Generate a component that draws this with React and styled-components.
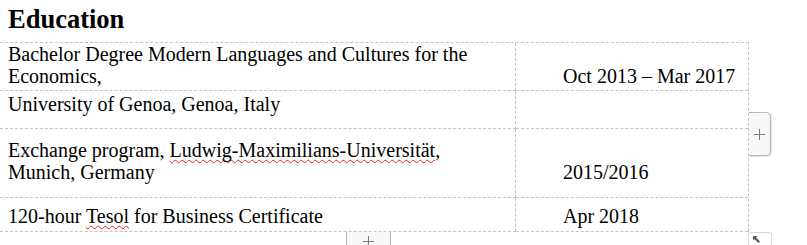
import React from "react";
import styled, { createGlobalStyle } from "styled-components";

const Global = createGlobalStyle`
  html, body { margin: 0; padding: 0; background: #ffffff; overflow: hidden; }
  body { font-family: "Liberation Serif", "Times New Roman", serif; color: #000; }
`;

const Page = styled.div`
  width: 807px;
  height: 245px;
  position: relative;
`;

const Heading = styled.h1`
  margin: 0;
  padding: 4px 0 8px 8px;
  font-family: "Liberation Serif", "Times New Roman", serif;
  font-size: 26.5px;
  line-height: 30px;
  font-weight: bold;
`;

const TableWrap = styled.div`
  position: relative;
  width: 749px;
`;

const Grid = styled.div`
  display: grid;
  grid-template-columns: 516px 232px;
  border-top: 1px dashed #c4c4c4;
  border-right: 1px dashed #c4c4c4;
`;

const Cell = styled.div`
  box-sizing: border-box;
  height: ${(p) => p.$h}px;
  padding: ${(p) => p.$top}px 0 0 ${(p) => (p.$date ? 47 : 8)}px;
  border-bottom: 1px dashed #c4c4c4;
  border-right: ${(p) => (p.$date ? "none" : "1px dashed #c4c4c4")};
  font-size: 20px;
  line-height: 22px;
  white-space: pre-line;
`;

const Squiggle = styled.span`
  text-decoration: underline wavy #e02424;
  text-decoration-thickness: 1px;
  text-underline-offset: 2px;
  text-decoration-skip-ink: none;
`;

const SideAdd = styled.div`
  position: absolute;
  left: 749px;
  top: 70px;
  width: 22px;
  height: 44px;
  box-sizing: border-box;
  background: #f7f7f7;
  border: 1px solid #b8b8b8;
  border-left: none;
  border-radius: 0 5px 5px 0;
  box-shadow: 1px 1px 1px rgba(0, 0, 0, 0.12);
  display: flex;
  align-items: center;
  justify-content: center;
`;

const BottomAdd = styled.div`
  position: absolute;
  left: 346px;
  top: 190px;
  width: 45px;
  height: 24px;
  box-sizing: border-box;
  background: #f7f7f7;
  border: 1px solid #b8b8b8;
  border-top: none;
  display: flex;
  justify-content: center;
  padding-top: 4px;
`;

const Resize = styled.div`
  position: absolute;
  left: 748px;
  top: 190px;
  width: 24px;
  height: 24px;
  box-sizing: border-box;
  background: #ffffff;
  border: 1px solid #d8d8d8;
  border-radius: 3px 3px 0 0;
  padding: 3px 0 0 4px;
  svg { display: block; }
`;

const Plus = () => (
  <svg width="11" height="11" viewBox="0 0 11 11" style={{ display: "block" }}>
    <path d="M5.5 0v11M0 5.5h11" stroke="#7a7a7a" strokeWidth="1" />
  </svg>
);

const Arrow = () => (
  <svg width="7" height="7" viewBox="0 0 8 8">
    <path d="M0 0h5L3.4 1.6 8 6.2 6.2 8 1.6 3.4 0 5z" fill="#555" />
  </svg>
);

const rows = [
  {
    h: 48,
    top: 0,
    left: "Bachelor Degree Modern Languages and Cultures for the\nEconomics,",
    date: "Oct 2013 \u2013 Mar 2017",
    dateTop: 22,
  },
  { h: 38, top: 2, left: "University of Genoa, Genoa, Italy", date: "", dateTop: 2 },
  {
    h: 69,
    top: 10,
    left: (
      <>
        Exchange program, <Squiggle>Ludwig-Maximilians-Universität</Squiggle>,{"\n"}Munich, Germany
      </>
    ),
    date: "2015/2016",
    dateTop: 32,
  },
  {
    h: 34,
    top: 7,
    left: (
      <>
        120-hour <Squiggle>Tesol</Squiggle> for Business Certificate
      </>
    ),
    date: "Apr 2018",
    dateTop: 7,
  },
];

export default function App() {
  return (
    <Page>
      <Global />
      <Heading>Education</Heading>
      <TableWrap>
        <Grid>
          {rows.map((r, i) => (
            <React.Fragment key={i}>
              <Cell $h={r.h} $top={r.top}>
                {r.left}
              </Cell>
              <Cell $h={r.h} $top={r.dateTop} $date>
                {r.date}
              </Cell>
            </React.Fragment>
          ))}
        </Grid>
        <SideAdd>
          <Plus />
        </SideAdd>
        <BottomAdd>
          <Plus />
        </BottomAdd>
        <Resize>
          <Arrow />
        </Resize>
      </TableWrap>
    </Page>
  );
}
